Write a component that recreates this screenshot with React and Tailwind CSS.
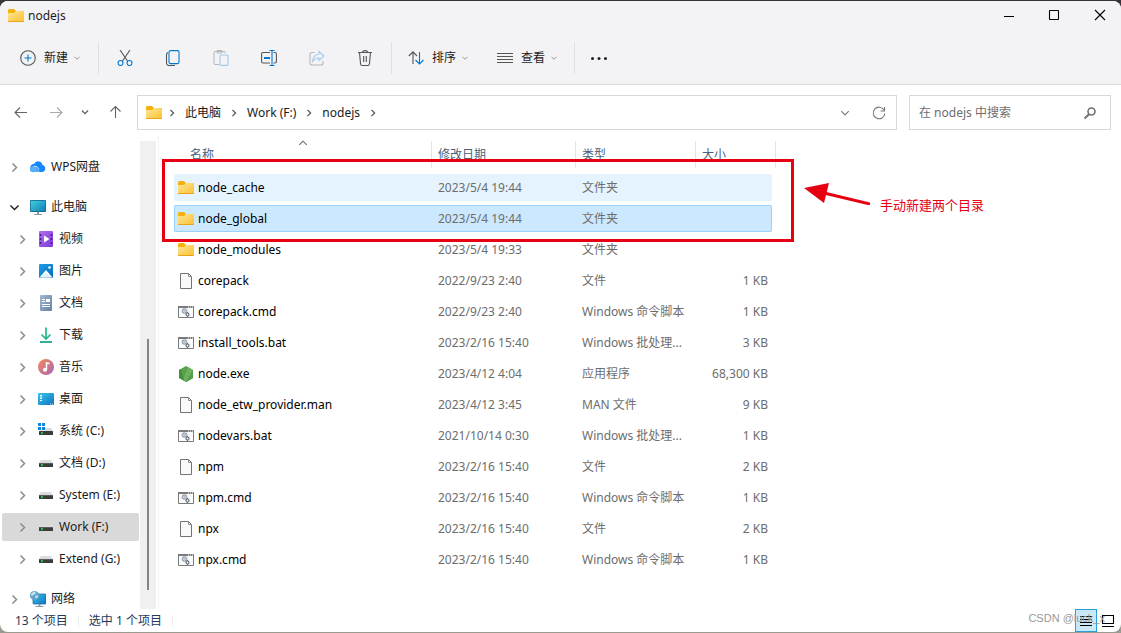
import React, { useState } from 'react'

const tree = [
  { name: 'WPS网盘', icon: 'cloud', level: 1 },
  { name: '此电脑', icon: 'pc', level: 1, open: true },
  { name: '视频', icon: 'video', level: 2 },
  { name: '图片', icon: 'picture', level: 2 },
  { name: '文档', icon: 'document', level: 2 },
  { name: '下载', icon: 'download', level: 2 },
  { name: '音乐', icon: 'music', level: 2 },
  { name: '桌面', icon: 'desktop', level: 2 },
  { name: '系统 (C:)', icon: 'system', level: 2 },
  { name: '文档 (D:)', icon: 'drive', level: 2 },
  { name: 'System (E:)', icon: 'drive', level: 2 },
  { name: 'Work (F:)', icon: 'drive', level: 2 },
  { name: 'Extend (G:)', icon: 'drive', level: 2 },
  { name: '网络', icon: 'network', level: 1 },
];

const files = [
  { name: 'node_cache', icon: 'folder', date: '2023/5/4 19:44', type: '文件夹', size: '' },
  { name: 'node_global', icon: 'folder', date: '2023/5/4 19:44', type: '文件夹', size: '' },
  { name: 'node_modules', icon: 'folder', date: '2023/5/4 19:33', type: '文件夹', size: '' },
  { name: 'corepack', icon: 'file', date: '2022/9/23 2:40', type: '文件', size: '1 KB' },
  { name: 'corepack.cmd', icon: 'script', date: '2022/9/23 2:40', type: 'Windows 命令脚本', size: '1 KB' },
  { name: 'install_tools.bat', icon: 'script', date: '2023/2/16 15:40', type: 'Windows 批处理...', size: '3 KB' },
  { name: 'node.exe', icon: 'node', date: '2023/4/12 4:04', type: '应用程序', size: '68,300 KB' },
  { name: 'node_etw_provider.man', icon: 'file', date: '2023/4/12 3:45', type: 'MAN 文件', size: '9 KB' },
  { name: 'nodevars.bat', icon: 'script', date: '2021/10/14 0:30', type: 'Windows 批处理...', size: '1 KB' },
  { name: 'npm', icon: 'file', date: '2023/2/16 15:40', type: '文件', size: '2 KB' },
  { name: 'npm.cmd', icon: 'script', date: '2023/2/16 15:40', type: 'Windows 命令脚本', size: '1 KB' },
  { name: 'npx', icon: 'file', date: '2023/2/16 15:40', type: '文件', size: '2 KB' },
  { name: 'npx.cmd', icon: 'script', date: '2023/2/16 15:40', type: 'Windows 命令脚本', size: '1 KB' },
];

// All the coloured 16x16 icons
const shapes = {
  folder: (
    <>
      <path d="M0 2.5Q0 1 1.5 1H6l2 2h7q1 0 1 1v3H0z" fill="#f5b10c" />
      <path d="M0 6q0-1 1-1h5l2-2h7q1 0 1 1v9q0 1-1 1H1q-1 0-1-1z" fill="url(#folderBody)" />
      <path d="M0 13h16q0 1-1 1H1q-1 0-1-1z" fill="#e8a317" />
    </>
  ),
  file: (
    <>
      <path d="M2.500.5h8l3 3v12h-11z" fill="#fafafa" stroke="#737373" />
      <path d="M10.500.5v3h3" fill="none" stroke="#8a8a8a" />
    </>
  ),
  script: (
    <>
      <path d="M.5 2.500h15v11H.5z" fill="#fbfbfb" stroke="#7a7a7a" />
      <path d="M0 2h16v2H0z" fill="#7a7a7a" />
      <path d="M10 3h1M12 3h1M14 3h1" stroke="#fff" />
      <circle cx="6.500" cy="7" r="2" fill="none" stroke="#9aa5b0" strokeWidth="1.600" />
      <path d="M6.500 4v6M3.500 7h6" stroke="#b8c0c8" />
      <circle cx="9.500" cy="10.500" r="1.500" fill="#fff" stroke="#5f6b78" strokeWidth="1.200" />
      <path d="M9.500 8v1M9.500 12v1" stroke="#5f6b78" />
    </>
  ),
  node: (
    <>
      <path d="M8 0l7 4v8l-7 4-7-4V4z" fill="#58a14c" />
      <path d="M10 1l5 3v8l-7 4-3-2z" fill="#6fb05c" />
      <path d="M1 4l2-1 3 11.500-5-2.500z" fill="#43913f" />
      <path d="M15 4v8l-7 4z" fill="#3f8f42" opacity=".6" />
    </>
  ),
  cloud: (
    <>
      <path d="M4.500 13A4 4 0 0 1 4 5a4.500 4.500 0 0 1 8.500 1A3.600 3.600 0 0 1 12.500 13z" fill="#1687fb" />
      <path d="M0 10.500A3.500 3.500 0 0 1 3.500 7C6 7 7 9 8 10.500S10 13 12 13H3.500A2.500 2.500 0 0 1 0 10.500z" fill="#56aefc" />
      <path d="M4 7.500C7 6.500 8 9 9 10.500" stroke="#fff" strokeWidth=".9" fill="none" />
    </>
  ),
  pc: (
    <>
      <rect x="0" y="1" width="16" height="12" rx="1" fill="#17618c" />
      <rect x=".7" y="1.700" width="14.600" height="10.600" rx=".5" fill="url(#screen)" />
      <path d="M7 13h2v2H7zM4 15h8v1H4z" fill="#8b9aa8" />
    </>
  ),
  video: (
    <>
      <rect x="1" y="0" width="14" height="16" rx="1" fill="url(#purple)" />
      <path d="M2.500 3v11M13.500 3v11" stroke="#4b1a9c" strokeWidth="1.600" strokeDasharray="2 2" />
      <path d="M6 4.500l5.500 3.500L6 11.500z" fill="#fff" />
    </>
  ),
  picture: (
    <>
      <rect x="1" y="1" width="14" height="14" rx="1" fill="url(#blue)" />
      <path d="M1.500 14.500L8 7l6.500 7.500z" fill="#fff" />
      <path d="M4 14.500l4-5 4 5z" fill="#dcefff" />
      <circle cx="11.500" cy="4.500" r="1.300" fill="#fff" />
    </>
  ),
  document: (
    <>
      <rect x="2" y="0" width="12" height="16" rx="1" fill="url(#steel)" />
      <path d="M4 4.500h3M4 6.500h3M4 9.500h8M4 11.500h8" stroke="#fff" />
      <path d="M8 4h4v3H8z" fill="#fff" />
    </>
  ),
  download: (
    <>
      <path d="M8 .5V12M3.500 7.500L8 12l4.500-4.500" stroke="#23b58c" strokeWidth="1.700" fill="none" />
      <path d="M2 15h12" stroke="#12a08c" strokeWidth="1.700" />
    </>
  ),
  music: (
    <>
      <circle cx="8" cy="8" r="8" fill="url(#orange)" />
      <path d="M8.500 3v7.500M8.500 3.700c1 .8 2 .8 3 .8" stroke="#fff" strokeWidth="1.500" fill="none" />
      <circle cx="7" cy="10.800" r="2" fill="#fff" />
    </>
  ),
  desktop: (
    <>
      <rect x="0" y="2" width="16" height="12" rx="1" fill="url(#screen2)" />
      <path d="M2 4h2v1.500H2zM2 6.500h2V8H2zM2 9h2v1H2z" fill="#fff" />
      <path d="M12 13h1M14 13h1" stroke="#cdeaff" />
    </>
  ),
  drive: (
    <>
      <path d="M3 5h10l2 3H1z" fill="#d9dcdf" />
      <rect x="1" y="8" width="14" height="4" rx=".5" fill="#3a3c3e" />
      <path d="M1 8.500h14" stroke="#5a5d60" />
      <path d="M3 10h2" stroke="#27e833" strokeWidth="1.300" />
    </>
  ),
  system: (
    <>
      <path d="M7 5h6l2 3H2V7.500h5z" fill="#d9dcdf" />
      <path d="M0 0h3v3H0zM4 0h3v3H4zM0 4h3v3H0zM4 4h3v3H4z" fill="#0c87dd" />
      <rect x="1" y="8" width="14" height="4" rx=".5" fill="#3a3c3e" />
      <path d="M3 10h2" stroke="#27e833" strokeWidth="1.300" />
    </>
  ),
  network: (
    <>
      <rect x="3" y="3" width="13" height="10" rx=".7" fill="url(#screen2)" stroke="#16689b" strokeWidth=".7" />
      <path d="M8.500 13h2v2h-2zM5.500 15h8v1h-8z" fill="#8b9aa8" />
      <circle cx="4.500" cy="4.500" r="4.500" fill="#5f9fc4" />
      <path d="M1 3q2-3 4-2.500l1 2.500-3 1-1 2zM5 5l3-1v2L6 8z" fill="#c3e2ee" />
    </>
  ),
};

function Icon({ name }) {
  return (
    <svg className="size-4 shrink-0" viewBox="0 0 16 16" aria-hidden="true">
      {shapes[name]}
    </svg>
  )
}

// Gradients shared by every icon on the page
function Gradients() {
  const list = [
    ['folderBody', '#ffe69a', '#fbc02f'],
    ['screen', '#3fd0e0', '#137fb5'],
    ['screen2', '#35c5ee', '#1272be'],
    ['purple', '#b36df0', '#7c3ad8'],
    ['blue', '#1ea0e8', '#0a68b8'],
    ['steel', '#a3b9cf', '#6482a4'],
    ['orange', '#f5895a', '#a866b8'],
  ];
  return (
    <svg className="absolute size-0" aria-hidden="true">
      <defs>
        {list.map(([id, from, to]) => (
          <linearGradient key={id} id={id} x1="0" y1="0" x2="1" y2="1">
            <stop offset="0" stopColor={from} />
            <stop offset="1" stopColor={to} />
          </linearGradient>
        ))}
      </defs>
    </svg>
  )
}

function Line({ children, className = 'size-4 text-[#555]', width = 1.1 }) {
  return (
    <svg className={`shrink-0 ${className}`} viewBox="0 0 16 16" fill="none" stroke="currentColor" strokeWidth={width} aria-hidden="true">
      {children}
    </svg>
  )
}

const chevronPaths = {
  down: 'M3 5.500l5 5 5-5',
  right: 'M5.500 3l5 5-5 5',
  up: 'M3 10.500l5-5 5 5',
};

function Chevron({ dir, className, width = 2 }) {
  return <Line className={className} width={width}><path d={chevronPaths[dir]} /></Line>
}

function TitleBar() {
  return (
    <header className="flex h-[30px] items-center justify-between">
      <div className="flex items-center gap-1 pb-px pl-2">
        <Icon name="folder" />
        <h1>nodejs</h1>
      </div>
      <div className="flex text-black">
        <button aria-label="最小化" className="flex h-[30px] w-[45px] items-center justify-center">
          <Line className="size-4"><path d="M3 8.500h10" /></Line>
        </button>
        <button aria-label="最大化" className="flex h-[30px] w-[45px] items-center justify-center">
          <Line className="size-4"><rect x="3.500" y="2.500" width="9" height="9" rx=".5" /></Line>
        </button>
        <button aria-label="关闭" className="flex h-[30px] w-[45px] items-center justify-center">
          <Line className="size-4"><path d="M4 2l10 10M14 2L4 12" /></Line>
        </button>
      </div>
    </header>
  )
}

function ToolButton({ label, children }) {
  return (
    <button aria-label={label} className="flex h-8 w-12 items-center justify-center">
      {children}
    </button>
  )
}

function Toolbar() {
  return (
    <div className="flex h-[53px] items-center pl-5">
      <button className="flex items-center gap-2">
        <Line>
          <circle cx="8" cy="8" r="7.300" />
          <path d="M8 4.500v7M4.500 8h7" stroke="#0078d4" />
        </Line>
        <span>新建</span>
        <Chevron dir="down" className="-ml-[3px] size-2 text-[#999]" />
      </button>
      <div className="ml-[17px] mr-0.5 h-8 w-px bg-[#e0e0e2]" />
      <ToolButton label="剪切">
        <Line>
          <path d="M3 0l7.500 11M13 0L5.500 11" />
          <circle cx="3.500" cy="13" r="2.500" stroke="#0078d4" />
          <circle cx="12.500" cy="13" r="2.500" stroke="#0078d4" />
        </Line>
      </ToolButton>
      <ToolButton label="复制">
        <Line>
          <path d="M3 2.500Q1.500 3 1.500 5v8q0 2.500 2.500 2.500h6" />
          <rect x="4" y=".6" width="10" height="13" rx="1.500" stroke="#0078d4" />
        </Line>
      </ToolButton>
      <ToolButton label="粘贴">
        <Line className="size-4 text-[#b8b8ba]">
          <path d="M6 14.500H2.500q-1.500 0-1.500-1.500V3q0-1.500 1.500-1.500h8Q12 1.500 12 3" />
          <rect x="4" y=".5" width="5" height="2.500" rx="1" />
          <rect x="7" y="5" width="8" height="10.400" rx="1" stroke="#a3cbea" />
        </Line>
      </ToolButton>
      <ToolButton label="重命名">
        <Line>
          <path d="M9 2.500H2Q.6 2.500.6 4v7.500Q.6 13 2 13h7M12.500 2.500H14q1.400 0 1.400 1.500v7.500Q15.400 13 14 13h-1.500" />
          <path d="M11 .5v15M8.500.5h5M8.500 15.500h5" stroke="#0078d4" />
          <path d="M3 8h6" stroke="#0078d4" strokeWidth="2" />
        </Line>
      </ToolButton>
      <ToolButton label="共享">
        <Line className="size-4 text-[#b8b8ba]">
          <path d="M5.500 2.500H3Q1 2.500 1 4.500V13q0 2 2 2h9q2 0 2-2v-2" />
          <path d="M10 1.500l5 4.500-5 4.500V8Q6 8 3.500 11.500 4 5 10 4z" stroke="#a3cbea" />
        </Line>
      </ToolButton>
      <ToolButton label="删除">
        <Line>
          <path d="M1 2.500h14M5.500 2.500Q5.500.6 8 .6t2.500 1.900M2.500 2.500l1 11q.2 2 2 2h5q1.800 0 2-2l1-11M6.700 6v6M9.300 6v6" />
        </Line>
      </ToolButton>
      <div className="ml-0.5 mr-4 h-8 w-px bg-[#e0e0e2]" />
      <button className="flex items-center gap-2">
        <Line>
          <path d="M5 14V2M.8 6L5 1.800 9 6" />
          <path d="M11.500 2v12M7.500 10l4 4 4-4" stroke="#0078d4" />
        </Line>
        <span>排序</span>
        <Chevron dir="down" className="-ml-[3px] size-2 text-[#999]" />
      </button>
      <button className="ml-7 flex items-center gap-2">
        <Line><path d="M0 3.500h16M0 6.500h16M0 9.500h16M0 12.500h16" strokeWidth="1" /></Line>
        <span>查看</span>
        <Chevron dir="down" className="-ml-[3px] size-2 text-[#999]" />
      </button>
      <div className="mx-4 h-8 w-px bg-[#e0e0e2]" />
      <button aria-label="更多">
        <svg className="size-4" viewBox="0 0 16 16" fill="#222">
          <circle cx="1.500" cy="8.500" r="1.500" />
          <circle cx="8" cy="8.500" r="1.500" />
          <circle cx="14.500" cy="8.500" r="1.500" />
        </svg>
      </button>
    </div>
  )
}

function AddressRow() {
  const crumbs = ['此电脑', 'Work (F:)', 'nodejs'];

  return (
    <div className="flex items-center pb-[7px] pl-[3px] pr-2.5 pt-2.5">
      <button aria-label="后退" className="flex h-8 w-[35px] items-center justify-center pb-0.5">
        <Line className="size-4 text-[#666]"><path d="M14 8.500H2M7 3.500l-5 5 5 5" /></Line>
      </button>
      <button aria-label="前进" className="flex h-8 w-[35px] items-center justify-center pb-0.5">
        <Line className="size-4 text-[#aaa]"><path d="M2 8.500h12M9 3.500l5 5-5 5" /></Line>
      </button>
      <button aria-label="最近浏览的位置" className="flex h-8 w-6 items-center justify-center pb-0.5">
        <Chevron dir="down" className="size-2.5 text-[#666]" />
      </button>
      <button aria-label="向上" className="mr-[5px] flex h-8 w-[35px] items-center justify-center pb-0.5">
        <Line className="size-4 text-[#666]"><path d="M8.500 14V2.500M3.500 7.500l5-5 5 5" /></Line>
      </button>

      <div className="flex h-[35px] flex-1 items-center border border-[#d9d9d9] bg-white pl-2">
        <Icon name="folder" />
        <nav className="flex flex-1 items-center gap-2 pl-[5px]">
          <Chevron dir="right" className="size-2.5 text-[#555]" />
          {crumbs.map(name => (
            <React.Fragment key={name}>
              <a href="#">{name}</a>
              <Chevron dir="right" className="size-2.5 text-[#555]" />
            </React.Fragment>
          ))}
        </nav>
        <button aria-label="以前的位置" className="flex h-8 w-[34px] items-center justify-center">
          <Chevron dir="down" className="size-3 text-[#777]" width={1.5} />
        </button>
        <button aria-label="刷新" className="flex h-8 w-[34px] items-center justify-center">
          <Line className="size-4 text-[#777]">
            <path d="M13 5A5.800 5.800 0 1 0 13.800 8.500M13.500 2v4h-4" />
          </Line>
        </button>
      </div>

      <div className="ml-3 flex h-[35px] w-[202px] items-center border border-[#d9d9d9] bg-white pl-[9px] pr-3">
        <input
          type="search"
          aria-label="搜索"
          placeholder="在 nodejs 中搜索"
          className="w-full min-w-0 flex-1 bg-transparent outline-none placeholder:text-[#6d6d6d]"
        />
        <Line className="size-4 text-[#707070]" width={1.6}>
          <circle cx="9.500" cy="6.500" r="3.500" />
          <path d="M7 9.200l-4.500 4.300" strokeWidth="2" />
        </Line>
      </div>
    </div>
  )
}

function Sidebar() {
  const [current, setCurrent] = useState('Work (F:)');

  return (
    <aside className="mt-1 flex w-[156px] shrink-0">
      <nav className="flex min-w-0 flex-1 flex-col gap-1 overflow-hidden pl-0.5 pr-px pt-3">
        {tree.map(item => (
          <button
            key={item.name}
            onClick={() => setCurrent(item.name)}
            className={`flex h-7 shrink-0 items-center gap-[5px] rounded-xs text-left whitespace-nowrap ${item.level === 1 ? 'pl-1.5' : 'pl-3.5'} ${item.icon === 'pc' || item.icon === 'network' ? 'mt-2' : ''} ${item.name === current ? 'bg-[#d9d9d9]' : ''}`}
          >
            {item.open
              ? <Chevron dir="down" className="mr-1 size-[13px] text-[#222]" width={1.8} />
              : <Chevron dir="right" className="mr-1 size-[13px] text-[#8a8a8a]" width={1.8} />}
            <Icon name={item.icon} />
            <span>{item.name}</span>
          </button>
        ))}
      </nav>
      {/* Scrollbar */}
      <div className="flex w-4 flex-col items-center bg-[#f0f0f0] pb-[19px]">
        <div className="mt-auto h-[56%] w-0.5 bg-[#858585]" />
      </div>
    </aside>
  )
}

function FileRow({ file, hovered, selected, onClick }) {
  let color = 'border-transparent';
  if (hovered) color = 'border-[#e5f3ff] bg-[#e5f3ff]';
  if (selected) color = 'border-[#99d1ff] bg-[#cce8ff]';

  return (
    <tr onClick={onClick} className="h-[27px] text-[#6d6d6d]">
      <td className={`rounded-l-xs border-y border-l p-0 pl-[3px] ${color}`}>
        <div className="flex items-center gap-1 text-black">
          <Icon name={file.icon} />
          <span>{file.name}</span>
        </div>
      </td>
      <td className={`border-y p-0 pl-1.5 ${color}`}>{file.date}</td>
      <td className={`border-y p-0 pl-1.5 ${color}`}>{file.type}</td>
      <td className={`rounded-r-xs border-y border-r p-0 pr-[3px] text-right ${color}`}>{file.size}</td>
      <td className="p-0" />
    </tr>
  )
}

function FileList() {
  const [selected, setSelected] = useState('node_global');

  return (
    <main className="relative ml-0.5 min-w-0 flex-1 border-l border-[#f3f3f3] pl-[15px]">
      <table className="w-[602px] table-fixed border-separate border-spacing-x-0 border-spacing-y-1 leading-4">
        <colgroup>
          <col className="w-[258px]" />
          <col className="w-36" />
          <col className="w-30" />
          <col className="w-19" />
          <col className="w-1" />
        </colgroup>
        <thead>
          <tr className="h-[29px] text-left align-top text-[#4c607a]">
            <th className="relative p-0 font-normal">
              <div className="flex h-[27px] items-center border-r border-[#e5e5e5] pl-4">名称</div>
              <Chevron dir="up" className="absolute inset-x-0 -top-1 mx-auto size-3 text-[#666]" width={1.4} />
            </th>
            <th className="p-0 font-normal">
              <div className="flex h-[27px] items-center border-r border-[#e5e5e5] pl-1.5">修改日期</div>
            </th>
            <th className="p-0 font-normal">
              <div className="flex h-[27px] items-center border-r border-[#e5e5e5] pl-1.5">类型</div>
            </th>
            <th className="p-0 font-normal">
              <div className="flex h-[27px] items-center pl-1.5">大小</div>
            </th>
            <th className="p-0"><div className="h-[27px] border-r border-[#e5e5e5]" /></th>
          </tr>
        </thead>
        <tbody>
          {files.map((file, index) => (
            <FileRow
              key={file.name}
              file={file}
              hovered={index === 0}
              selected={file.name === selected}
              onClick={() => setSelected(file.name)}
            />
          ))}
        </tbody>
      </table>

      {/* Red box, arrow and note over the two new folders */}
      <div className="pointer-events-none absolute left-[3px] top-[22px] h-[83px] w-[632px] border-3 border-[#e60012]" />
      <div className="pointer-events-none absolute left-[645px] top-[46px] flex items-end gap-2.5 text-[#e60012]">
        <svg className="h-[22px] w-[66px]" viewBox="0 0 66 22" fill="currentColor" aria-hidden="true">
          <path d="M0 5L25 0l-5 20z" />
          <path d="M20 10l46 11" stroke="currentColor" strokeWidth="3" />
        </svg>
        <p className="-mb-2.5 text-[13px] leading-5">手动新建两个目录</p>
      </div>
    </main>
  )
}

function StatusBar() {
  return (
    <footer className="relative flex h-[23px] items-center justify-between pl-[15px] pr-[3px] text-[#1e395b]">
      <div className="flex items-center">
        <span>13 个项目</span>
        <span className="mx-2.5 h-3 w-px bg-[#eee]" />
        <span>选中 1 个项目</span>
        <span className="mx-2.5 h-3 w-px bg-[#eee]" />
      </div>
      <div className="flex text-black">
        <button aria-label="详细信息" className="flex h-[23px] w-[22px] items-center justify-center border border-[#26a0da] bg-[#cbe8f6]">
          <Line className="size-4"><path d="M2 3.500h12M2 6.500h12M2 9.500h12M2 12.500h12" strokeWidth="1" /></Line>
        </button>
        <button aria-label="大图标" className="flex h-[23px] w-[21px] items-center justify-center">
          <Line className="size-4"><path d="M2.500 2.500h11v8h-11zM2 13.500h12" /></Line>
        </button>
      </div>
      <span className="pointer-events-none absolute bottom-1.5 right-4 font-['Liberation_Sans',sans-serif] text-[11px] leading-4 text-[#999]">CSDN @luck_x</span>
    </footer>
  )
}

function App() {
  return (
    <div className="flex h-screen flex-col bg-[linear-gradient(#37333b_50%,#989b8e_50%)] py-px font-['Noto_Sans','Noto_Sans_CJK_SC',sans-serif] text-xs leading-4 text-[#1b1b1b]">
      <Gradients />
      <div className="flex min-h-0 flex-1 flex-col overflow-hidden rounded-lg bg-white">
        <div className="border-b border-[#dcdcde] bg-[#f3f3f5]">
          <TitleBar />
          <Toolbar />
        </div>
        <AddressRow />
        <div className="flex min-h-0 flex-1">
          <Sidebar />
          <FileList />
        </div>
        <StatusBar />
      </div>
    </div>
  )
}

export default App
